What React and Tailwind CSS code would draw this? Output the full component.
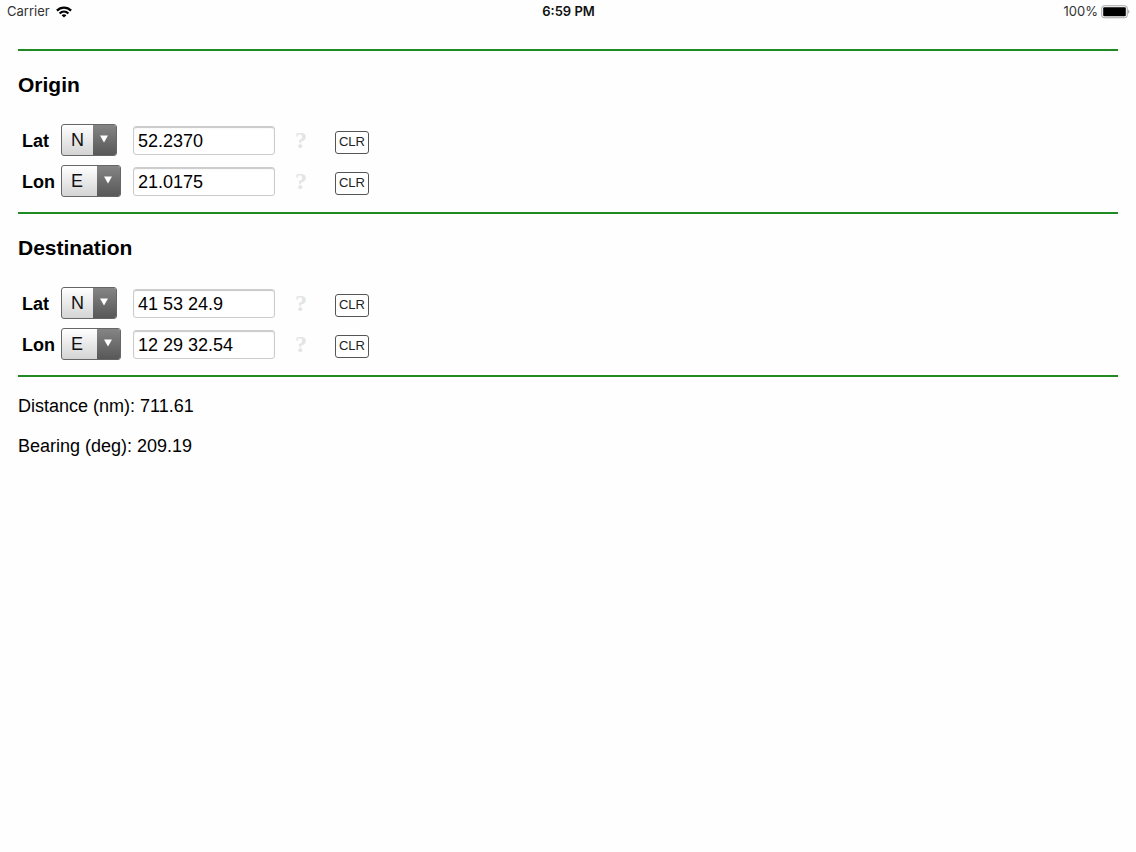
import { useState } from 'react';

const STATUS_FONT = "font-['Inter','Liberation_Sans',sans-serif]";

function WifiIcon() {
  return (
    <svg width="16" height="12" viewBox="0 0 16 12" fill="none" stroke="#000" strokeWidth="2.3" aria-hidden="true">
      <path d="M0.9 4.6C4.9 0.6 11.1 0.6 15.1 4.6" />
      <path d="M3.6 7.5C6.2 5 9.8 5 12.4 7.5" />
      <path d="M8 11.6L5.6 9.2C7 7.9 9 7.9 10.4 9.2Z" fill="#000" stroke="none" />
    </svg>
  );
}

function BatteryIcon() {
  return (
    <svg width="29" height="14" viewBox="0 0 29 14" aria-hidden="true">
      <rect x="0.75" y="0.75" width="25.5" height="12" rx="2.5" fill="#fff" stroke="#a3a3a3" />
      <rect x="2.2" y="2.2" width="22.6" height="9.1" rx="1" fill="#000" />
      <path d="M27.3 4.8C28.7 5.4 28.7 8.1 27.3 8.7Z" fill="#8a8a8a" />
    </svg>
  );
}

function StatusBar() {
  return (
    <header className={`grid grid-cols-3 items-center h-6 pl-[7px] pr-1.5 text-[13px] text-[#333] ${STATUS_FONT}`}>
      <div className="flex items-center gap-1.5">
        <span>Carrier</span>
        <WifiIcon />
      </div>
      <div className="text-center font-semibold text-[#111]">6:59 PM</div>
      <div className="flex items-center justify-end gap-[3px]">
        <span>100%</span>
        <BatteryIcon />
      </div>
    </header>
  );
}

function HemisphereSelect({ id, label, options, value, onChange, wide }) {
  return (
    <div
      className={`relative flex h-8 overflow-hidden rounded-[3px] border border-[#666] bg-linear-to-b from-white to-[#d4d4d4] ${
        wide ? 'w-[60px]' : 'w-14'
      }`}
    >
      <select
        id={id}
        aria-label={label}
        value={value}
        onChange={(e) => onChange(e.target.value)}
        className="w-full appearance-none bg-transparent pt-px pl-[9px] pr-6 text-lg leading-[29px] text-[#111] outline-none"
      >
        {options.map((o) => (
          <option key={o}>{o}</option>
        ))}
      </select>
      <span className="pointer-events-none absolute inset-y-0 right-0 flex w-[23px] justify-center bg-linear-to-b from-[#858585] to-[#585858] pt-[10px] pr-[2px]">
        <svg width="8" height="8" viewBox="0 0 8 8" fill="#fff" aria-hidden="true">
          <path d="M0 0.5H8L4 7.5Z" />
        </svg>
      </span>
    </div>
  );
}

function CoordinateRow({ id, label, options, initial, wide }) {
  const [hemisphere, setHemisphere] = useState(options[0]);
  const [value, setValue] = useState(initial);

  return (
    <div className="flex h-8 items-center pl-1">
      <label htmlFor={id} className="w-[39px] pt-0.5 text-lg font-bold">{label}</label>
      <div className="w-[72px]">
        <HemisphereSelect
          id={`${id}-hemisphere`}
          label={`${label} hemisphere`}
          options={options}
          value={hemisphere}
          onChange={setHemisphere}
          wide={wide}
        />
      </div>
      <input
        id={id}
        type="text"
        value={value}
        onChange={(e) => setValue(e.target.value)}
        className="h-[29px] w-[142px] rounded-[3px] border border-[#ccc] bg-white px-1 pt-0.5 text-lg shadow-[inset_0_1px_1px_#c8c8c8] outline-none"
      />
      <button type="button" className="ml-5 w-3 font-['Liberation_Serif',serif] text-2xl font-bold text-[#e4e4e4]">
        ?
      </button>
      <button
        type="button"
        onClick={() => setValue('')}
        className="mt-1 ml-7 h-[23px] w-[34px] rounded-[3px] border border-[#555] bg-white text-center text-[13px] text-[#222]"
      >
        CLR
      </button>
    </div>
  );
}

function Position({ title, prefix, lat, lon }) {
  return (
    <section className="border-b-2 border-[#1f8a1f] pt-5 pb-[15px]">
      <h2 className="text-[21px] leading-[28px] font-bold">{title}</h2>
      <div className="mt-[25px] flex flex-col gap-[9px]">
        <CoordinateRow id={`${prefix}-lat`} label="Lat" options={['N', 'S']} initial={lat} />
        <CoordinateRow id={`${prefix}-lon`} label="Lon" options={['E', 'W']} initial={lon} wide />
      </div>
    </section>
  );
}

export default function App() {
  return (
    <div className="min-h-screen bg-[#fefefe] font-['Liberation_Sans',Arial,sans-serif] text-black">
      <StatusBar />
      <main className="px-[18px] pt-[25px]">
        <div className="border-t-2 border-[#1f8a1f]">
          <Position title="Origin" prefix="origin" lat="52.2370" lon="21.0175" />
          <Position title="Destination" prefix="destination" lat="41 53 24.9" lon="12 29 32.54" />
        </div>
        <div className="flex flex-col gap-5 pt-[19px] text-lg leading-5">
          <p>Distance (nm): 711.61</p>
          <p>Bearing (deg): 209.19</p>
        </div>
      </main>
    </div>
  );
}
